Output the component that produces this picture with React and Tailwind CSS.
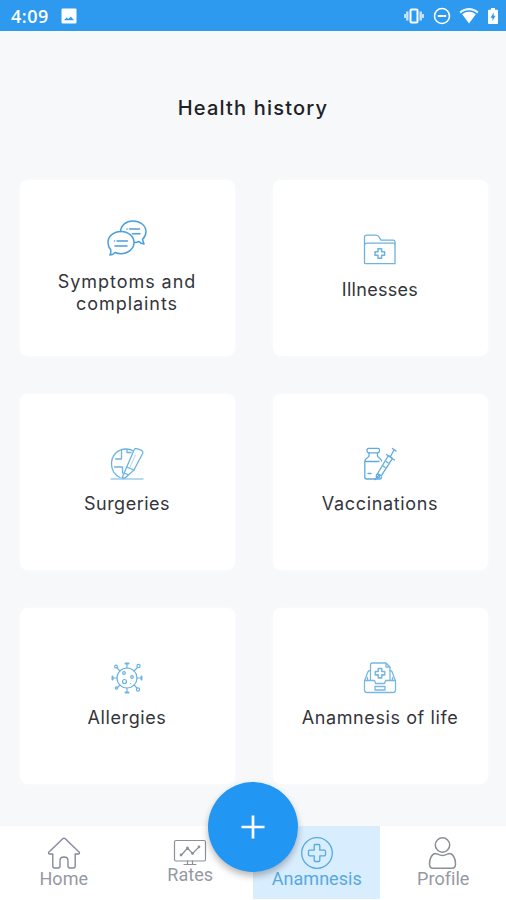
import { useState } from "react";

const SymptomsIcon = () => (
  <svg width="40" height="40" viewBox="0 0 40 40" fill="none" stroke="#4a9fdd" strokeWidth="1.5" strokeLinecap="round" strokeLinejoin="round">
    <path d="M13.5 12.5C14 6 19 2 26 2s13 4.500 13 10.500c0 3.500-1.500 6-3.500 8l1.500 4.500c-2-.2-3.800-1-5-2.500-1.500.7-3 1-4.500 1" />
    <path d="M14 12.500c7.300 0 13 4.800 13 11s-5.700 11.200-13 11.200c-2.200 0-4.200-.4-6-1.200-1.200 1.500-3 2.500-5.200 2.500.9-1.400 1.300-3.400 1-5C2 29 1 26.500 1 23.500c0-6.200 5.700-11 13-11Z" />
    <path d="M20 10h.1M22.500 10h10M25.500 14.800h7.500M7.500 22h.1M10 22h10.500M8 27h12" />
  </svg>
);

const IllnessesIcon = () => (
  <svg width="34" height="34" viewBox="0 0 34 34" fill="none" stroke="#6db3e2" strokeWidth="1.300" strokeLinejoin="round">
    <path d="M1.500 29.500V4a1.800 1.800 0 0 1 1.800-1.800h9.500c1.500 0 2.500.5 3.300 1.800l1.900 3.200h12.200A1.800 1.800 0 0 1 32 9v21.700H2.700a1.200 1.200 0 0 1-1.200-1.200Z" />
    <path d="M2 11.500c0-1 .7-1.300 1.500-1.300h26.700c1 0 1.800.6 1.800 1.600" />
    <path d="M15 15.700h3.600v3h3v3.600h-3v3H15v-3h-3v-3.600h3Z" strokeWidth="1.500" />
  </svg>
);

const SurgeriesIcon = () => (
  <svg width="34" height="34" viewBox="0 0 34 34" fill="none" stroke="#6db3e2" strokeWidth="1.300" strokeLinecap="round" strokeLinejoin="round">
    <path d="M10 30.500C5 28 1.500 23.500 1.500 17 1.500 8.500 7.500 2 16 2c3 0 5.500.7 7.500 2" />
    <path d="M11.500 3.500V12H5.500M4.500 20h8v6M17 2.500V5.500h4" />
    <path d="m12 31 12-28c.6-1.500 2-1.800 3.500-1.200l3.500 1.400c1.600.6 2.100 2 1.500 3.500L24 23l-9 8Z" />
    <path d="m16.500 20 7.500 3M14 26l4.500 1.800" />
    <path d="m20 20 5.500-12" opacity=".4" />
    <path d="M1 32h32" opacity=".65" />
  </svg>
);

const VaccinationsIcon = () => (
  <svg width="34" height="34" viewBox="0 0 34 34" fill="none" stroke="#5eabe0" strokeWidth="1.300" strokeLinecap="round" strokeLinejoin="round">
    <rect x="4" y="1.300" width="12.500" height="4.500" rx="1.800" />
    <path d="M6 6v3c0 1.500-4.200 2.200-4.200 5v16c0 1.200.7 2 2 2h12.700c1.300 0 2-.8 2-2M14.500 6v3c0 1.500 4 2.200 4 5M2 14.500h14M5 26.500h3" />
    <path d="m14.500 26.500 11-18 4 2.800-11.300 17.500ZM23.500 7.500l8 5.500M27.500 9.500l3.500-6.500M29.500 1.500l3.500 2.500M16 28l-4 4.500" />
    <circle cx="15" cy="29" r="1.800" />
    <path d="m20 19 2 1.300M23 14.500l2 1.300" />
  </svg>
);

const AllergiesIcon = () => (
  <svg width="34" height="34" viewBox="0 0 34 34" fill="none" stroke="#6db3e2" strokeWidth="1.200" strokeLinecap="round">
    <circle cx="17" cy="17" r="10" />
    <path d="M17 7V3M17 27v4M7 17H3M27 17h4M10 10 7 7M24 10l3-3M10 24l-3 3M24 24l3 3" />
    <path d="M15.500 2.500h3M15.500 31.500h3M2.500 15.500v3M31.500 15.500v3" strokeWidth="2" />
    <circle cx="6" cy="5.500" r="1.400" />
    <circle cx="28.500" cy="5" r="1.600" />
    <circle cx="6.500" cy="27" r="1.200" />
    <circle cx="28" cy="28.500" r="1.600" />
    <circle cx="14" cy="12" r="1.300" />
    <circle cx="22" cy="16" r="1.300" />
    <circle cx="14.500" cy="20.500" r="2" />
    <path d="M20.500 22.500h.1" />
  </svg>
);

const LifeIcon = () => (
  <svg width="34" height="34" viewBox="0 0 34 34" fill="none" stroke="#78b8e2" strokeWidth="1.300" strokeLinecap="round" strokeLinejoin="round">
    <path d="M7.500 19V4c0-1.200.7-2 2-2H23l4 4v13M23 2v4h4" />
    <path d="M15.300 7.500h3.400v3h3v3.400h-3v3h-3.400v-3h-3v-3.400h3Z" strokeWidth="1.600" />
    <path d="M7.500 9.500c-1.500 0-2.300.5-2.700 1.500L1.500 20v9c0 1.500.8 2.500 2.500 2.500h26c1.700 0 2.500-1 2.500-2.500v-9L29.200 11c-.4-1-1-1.500-2.200-1.500M1.500 19.500h10l1.200 3h8.800l1.200-3h9.800" />
    <path d="M4.500 16.500v3M29.500 16.500v3M12 25.500h10v3.500H12Z" />
  </svg>
);

const HomeIcon = () => (
  <svg width="34" height="34" viewBox="0 0 34 34" fill="none" stroke="#858b9c" strokeWidth="1.400" strokeLinejoin="round">
    <path d="M17 2.200c.5 0 .9.200 1.300.6L32 16c1 1 .3 2-.8 2h-3v12c0 1.500-.7 2-2 2h-3.400c-1.300 0-1.800-.8-1.800-2v-5.500c0-2.300-1.500-3.500-4-3.500s-4 1.200-4 3.500V30c0 1.200-.5 2-1.800 2H7.800c-1.300 0-2-.5-2-2V18h-3c-1.100 0-1.800-1-.8-2L15.700 2.800c.4-.4.800-.6 1.300-.6Z" />
  </svg>
);

const RatesIcon = () => (
  <svg width="34" height="28" viewBox="0 0 34 28" fill="none" stroke="#8b909a" strokeWidth="1.200" strokeLinecap="round" strokeLinejoin="round">
    <rect x="1.500" y="2.500" width="31" height="20.500" rx="1.500" />
    <path d="M14.500 23v3M19.500 23v3M11 26.500h12" />
    <path d="m8.500 17 6-7 5 5.500L26 9" />
    <circle cx="8" cy="17" r=".8" />
    <circle cx="14.500" cy="10" r=".8" />
    <circle cx="19.500" cy="15.500" r=".8" />
    <circle cx="26" cy="8.800" r=".8" />
  </svg>
);

const AnamnesisIcon = () => (
  <svg width="34" height="34" viewBox="0 0 34 34" fill="none" stroke="#57a9e3" strokeWidth="1.300" strokeLinejoin="round">
    <circle cx="17" cy="17" r="15.300" />
    <path d="M14.200 9.500c0-.6.4-1 1-1h3.600c.6 0 1 .4 1 1v4.700h4.700c.6 0 1 .4 1 1v3.600c0 .6-.4 1-1 1h-4.700v4.700c0 .6-.4 1-1 1h-3.600c-.6 0-1-.4-1-1v-4.700H9.500c-.6 0-1-.4-1-1v-3.600c0-.6.4-1 1-1h4.700Z" />
  </svg>
);

const ProfileIcon = () => (
  <svg width="34" height="34" viewBox="0 0 34 34" fill="none" stroke="#8b8f96" strokeWidth="1.500" strokeLinejoin="round">
    <circle cx="16.500" cy="9" r="7.200" />
    <path d="M9.500 17.500c1.500 0 3.500 2 7 2s5.500-2 7-2c3.200 0 6 4.500 6 10.500 0 2.800-1 4.200-3.500 4.200H7c-2.500 0-3.500-1.400-3.500-4.200 0-6 2.800-10.500 6-10.500Z" />
  </svg>
);

const sections = [
  { label: "Symptoms and complaints", icon: SymptomsIcon, tracking: "tracking-[0.95px]" },
  { label: "Illnesses", icon: IllnessesIcon, tracking: "tracking-[0.3px]" },
  { label: "Surgeries", icon: SurgeriesIcon, tracking: "tracking-[0.5px]" },
  { label: "Vaccinations", icon: VaccinationsIcon, tracking: "tracking-[0.65px]" },
  { label: "Allergies", icon: AllergiesIcon, tracking: "tracking-[0.6px]" },
  { label: "Anamnesis of life", icon: LifeIcon, tracking: "tracking-[0.6px]" },
];

const tabs = [
  { id: "home", label: "Home", icon: HomeIcon },
  { id: "rates", label: "Rates", icon: RatesIcon },
  { id: "anamnesis", label: "Anamnesis", icon: AnamnesisIcon },
  { id: "profile", label: "Profile", icon: ProfileIcon },
];

const StatusBar = () => (
  <div className="flex h-[31px] items-center justify-between bg-[#2d9aef] pl-[11px] pr-[7px] text-white">
    <div className="flex items-center gap-3">
      <span className="font-['Open_Sans',sans-serif] text-[18px] font-semibold leading-none tracking-[0.5px]">4:09</span>
      <svg width="16" height="16" viewBox="0 0 16 16" fill="currentColor">
        <path fillRule="evenodd" d="M1.800.500h12.400a1.300 1.300 0 0 1 1.300 1.300v12.400a1.300 1.300 0 0 1-1.300 1.300H1.800a1.300 1.300 0 0 1-1.300-1.300V1.800A1.300 1.300 0 0 1 1.800.500ZM3 12.300h10L9.800 8.500l-2.500 2.600L5.500 9.500Z" />
      </svg>
    </div>
    <div className="flex items-center">
      <svg className="mr-2" width="22" height="18" viewBox="0 0 22 18" fill="none" stroke="currentColor">
        <rect x="7.500" y="2.500" width="7" height="13" rx="1" strokeWidth="2" />
        <path d="M4.300 4.500v9M17.700 4.500v9" strokeWidth="2.400" opacity=".75" />
        <path d="M2 7v4M20 7v4" strokeWidth="2" opacity=".7" />
      </svg>
      <svg className="mr-2" width="18" height="18" viewBox="0 0 18 18" fill="none" stroke="currentColor" strokeWidth="1.600">
        <circle cx="9" cy="9" r="7.500" />
        <path d="M4.800 9h8.400" strokeWidth="2" />
      </svg>
      <svg className="mr-2" width="20" height="18" viewBox="0 0 20 18" fill="currentColor">
        <path d="M.5 4.800C6-.2 14-.2 19.500 4.800l-1.300 1.700C13.500 2.200 6.500 2.200 1.800 6.500Z" opacity=".9" />
        <path d="M3.200 7.300c4-3.300 9.600-3.300 13.600 0L10 16.500Z" />
      </svg>
      <svg width="12" height="18" viewBox="0 0 12 18" fill="currentColor">
        <path fillRule="evenodd" d="M4 1h4v1.700h2c.6 0 1 .4 1 1V16c0 .6-.4 1-1 1H2c-.6 0-1-.4-1-1V3.700c0-.6.4-1 1-1h2ZM6.700 5.500 3.500 10.800h2V14l3-5.200H6.700Z" />
      </svg>
    </div>
  </div>
);

const SectionCard = ({ section }) => (
  <button className="flex h-44 flex-col items-center justify-center gap-3 rounded-lg bg-white pb-0.5 pl-6 pr-[25px] shadow-[0_0_6px_rgba(255,255,255,0.6)]">
    <section.icon />
    <span className={`text-center text-[18px] leading-[22px] text-[#34353b] ${section.tracking}`}>
      {section.label}
    </span>
  </button>
);

const TabBar = ({ active, setActive }) => (
  <nav className="relative grid h-[74px] grid-cols-4 bg-white">
    {tabs.map((tab) => {
      const isActive = tab.id === active;
      return (
        <button
          key={tab.id}
          onClick={() => setActive(tab.id)}
          className={`flex h-[73px] flex-col items-center pl-px font-[Roboto,sans-serif] text-[18px] leading-[18px] tracking-[0.05px] ${
            tab.id === "rates" ? "pt-3" : "pt-2.5"
          } ${isActive ? "bg-[#d8edfe] text-[#57a9e3]" : "text-[#9599a3]"}`}
        >
          <tab.icon />
          <span>{tab.label}</span>
        </button>
      );
    })}
    <button
      aria-label="Add"
      className="absolute -top-11 left-[208px] flex size-[90px] items-center justify-center rounded-full bg-[#2196f3] shadow-[0_4px_7px_rgba(0,0,0,0.28)]"
    >
      <svg width="24" height="24" viewBox="0 0 24 24" stroke="white" strokeWidth="2.700">
        <path d="M12 .5v23M.5 12h23" />
      </svg>
    </button>
  </nav>
);

const App = () => {
  const [activeTab, setActiveTab] = useState("anamnesis");

  return (
    <div className="flex h-[900px] w-[506px] flex-col overflow-hidden bg-[#f6f8fa] font-[Inter,sans-serif]">
      <StatusBar />
      <main className="flex-1">
        <h1 className="pt-16 text-center text-[20px] font-medium leading-[26px] tracking-[1.2px] text-[#202126]">
          Health history
        </h1>
        <div className="mt-[59px] grid grid-cols-2 gap-[38px] pl-5 pr-[18px]">
          {sections.map((section) => (
            <SectionCard key={section.label} section={section} />
          ))}
        </div>
      </main>
      <TabBar active={activeTab} setActive={setActiveTab} />
    </div>
  );
};

export default App;
